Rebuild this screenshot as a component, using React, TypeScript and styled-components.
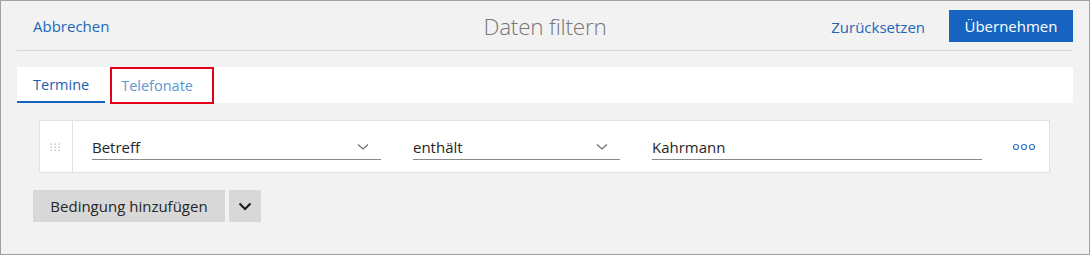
import * as React from 'react'
import styled, {createGlobalStyle} from 'styled-components'

const GlobalStyle = createGlobalStyle`
  html, body {
    margin: 0;
    padding: 0;
    background: #f2f2f2;
  }
  body {
    font-family: "Open Sans", "Noto Sans", sans-serif;
  }
`

const Frame = styled.div`
  box-sizing: border-box;
  width: 1090px;
  height: 255px;
  border: 1px solid #a0a0a0;
  background: #f2f2f2;
  padding: 0 16px;
  display: flex;
  flex-direction: column;
`

// Header bar
const Header = styled.div`
  height: 49px;
  display: grid;
  grid-template-columns: 1fr auto 1fr;
  align-items: center;
  border-bottom: 1px solid #d6d6d6;
`

const Title = styled.div`
  font-size: 22.5px;
  font-weight: 300;
  color: #767676;
  letter-spacing: -0.2px;
  margin-top: 2px;
`

const LinkButton = styled.button`
  border: none;
  background: none;
  padding: 0;
  font-family: inherit;
  font-size: 15px;
  color: #2266b8;
  cursor: pointer;
  margin-top: 2px;
`

const HeaderLeft = styled.div`
  padding-left: 16px;
`

const HeaderRight = styled.div`
  display: flex;
  justify-content: flex-end;
  align-items: center;
  gap: 24px;
`

const PrimaryButton = styled.button`
  height: 32px;
  width: 124px;
  border: none;
  background: #1664bf;
  color: #fff;
  font-family: inherit;
  font-size: 15px;
  margin-top: 1px;
`

// Tabs
const TabStrip = styled.div`
  margin-top: 16px;
  height: 36px;
  background: #fff;
  display: flex;
  align-items: stretch;
  gap: 5px;
`

const Tab = styled.div<{$active?: boolean; $marked?: boolean}>`
  box-sizing: border-box;
  display: flex;
  align-items: center;
  font-size: 14.5px;
  color: ${({$active}) => ($active ? '#1e60b0' : '#5e96d2')};
  padding: ${({$marked}) => ($marked ? '0 19px 0 9px' : '0 16px')};
  border-bottom: ${({$active}) => ($active ? '2px solid #1664bf' : 'none')};
  border: ${({$marked}) => ($marked ? '2px solid #e2001a' : undefined)};
  height: ${({$marked}) => ($marked ? '37px' : '36px')};
`

// Condition card
const Card = styled.div`
  margin: 17px 23px 0 22px;
  height: 53px;
  box-sizing: border-box;
  background: #fff;
  border: 1px solid #e2e2e2;
  display: flex;
  align-items: stretch;
`

const Handle = styled.div`
  flex: 0 0 32px;
  border-right: 1px solid #e2e2e2;
  display: flex;
  align-items: center;
  justify-content: center;
`

const Fields = styled.div`
  flex: 1;
  display: flex;
  align-items: center;
  padding-left: 19px;
  gap: 32px;
`

const Field = styled.div<{$width: number}>`
  box-sizing: border-box;
  flex: 0 0 ${({$width}) => $width}px;
  height: 26px;
  border-bottom: 1px solid #8a8a8a;
  display: flex;
  align-items: center;
  justify-content: space-between;
  font-size: 15px;
  color: #262626;
  margin-top: 1px;
`

const Chevron = styled.svg`
  margin-right: 12px;
`

const More = styled.div`
  flex: 0 0 22px;
  margin-left: -1px;
  display: flex;
  align-items: center;
`

// Add condition
const AddRow = styled.div`
  margin: 17px 0 0 16px;
  display: flex;
  gap: 4px;
`

const GrayButton = styled.button<{$square?: boolean}>`
  height: 32px;
  width: ${({$square}) => ($square ? '32px' : '192px')};
  border: none;
  background: #d8d8d8;
  font-family: inherit;
  font-size: 15px;
  color: #262626;
  padding: 0;
  display: flex;
  align-items: center;
  justify-content: center;
`

function SelectChevron() {
  return (
    <Chevron width="12" height="8" viewBox="0 0 12 8">
      <path d="M1 1.5 L6 6 L11 1.5" fill="none" stroke="#6a6a6a" strokeWidth="1.1" />
    </Chevron>
  )
}

export default function App() {
  return (
    <>
      <GlobalStyle />
      <Frame>
        <Header>
          <HeaderLeft>
            <LinkButton>Abbrechen</LinkButton>
          </HeaderLeft>
          <Title>Daten filtern</Title>
          <HeaderRight>
            <LinkButton>Zurücksetzen</LinkButton>
            <PrimaryButton>Übernehmen</PrimaryButton>
          </HeaderRight>
        </Header>
        <TabStrip>
          <Tab $active>Termine</Tab>
          <Tab $marked>Telefonate</Tab>
        </TabStrip>
        <Card>
          <Handle>
            <svg width="12" height="8" viewBox="0 0 12 8">
              {[1, 5, 9].map((x) =>
                [1, 4, 7].map((y) => (
                  <rect key={`${x}-${y}`} x={x - 0.5} y={y - 0.5} width="1.2" height="1.2" fill="#a8a8a8" />
                )),
              )}
            </svg>
          </Handle>
          <Fields>
            <Field $width={289}>
              Betreff
              <SelectChevron />
            </Field>
            <Field $width={207}>
              enthält
              <SelectChevron />
            </Field>
            <Field $width={330}>Kahrmann</Field>
            <More>
              <svg width="22" height="8" viewBox="0 0 22 8">
                {[3, 11, 19].map((cx) => (
                  <circle key={cx} cx={cx} cy="4" r="2.5" fill="none" stroke="#2a72c8" strokeWidth="1.2" />
                ))}
              </svg>
            </More>
          </Fields>
        </Card>
        <AddRow>
          <GrayButton>Bedingung hinzufügen</GrayButton>
          <GrayButton $square>
            <svg width="14" height="9" viewBox="0 0 14 9">
              <path d="M1.5 1.5 L7 7 L12.5 1.5" fill="none" stroke="#1a1a1a" strokeWidth="2" />
            </svg>
          </GrayButton>
        </AddRow>
      </Frame>
    </>
  )
}
